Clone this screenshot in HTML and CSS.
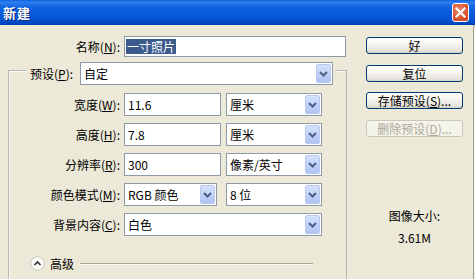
FILE: index.html
```
<!DOCTYPE html>
<html>
<head>
<meta charset="utf-8">
<title>新建</title>
<link rel="stylesheet" href="styles.css">
</head>
<body>
<div class="window">
  <div class="titlebar">
    <span class="title">新建</span>
    <span class="close"><svg width="17" height="19" viewBox="0 0 17 19"><path d="M4.5 5.5 L12.5 13.5 M12.5 5.5 L4.5 13.5" stroke="#fff" stroke-width="2.2" stroke-linecap="square" fill="none"/></svg></span>
  </div>
  <div class="content">
    <div class="main">
      <div class="name-row">
        <span class="lbl name-lbl">名称(<u>N</u>):</span>
        <div class="field name-field"><span class="sel">一寸照片</span></div>
      </div>
      <div class="group">
        <div class="group-head">
          <span class="lbl head-lbl">预设(<u>P</u>):</span>
          <div class="select preset"><span class="val">自定</span><span class="arrow"><svg width="9" height="6" viewBox="0 0 9 6"><path d="M1 1 L4.5 4.5 L8 1" stroke="#4d6185" stroke-width="2" fill="none"/></svg></span></div>
        </div>
        <div class="rows">
          <span class="lbl">宽度(<u>W</u>):</span>
          <div class="pair">
            <div class="field num">11.6</div>
            <div class="select unit"><span class="val">厘米</span><span class="arrow"><svg width="9" height="6" viewBox="0 0 9 6"><path d="M1 1 L4.5 4.5 L8 1" stroke="#4d6185" stroke-width="2" fill="none"/></svg></span></div>
          </div>
          <span class="lbl">高度(<u>H</u>):</span>
          <div class="pair">
            <div class="field num">7.8</div>
            <div class="select unit"><span class="val">厘米</span><span class="arrow"><svg width="9" height="6" viewBox="0 0 9 6"><path d="M1 1 L4.5 4.5 L8 1" stroke="#4d6185" stroke-width="2" fill="none"/></svg></span></div>
          </div>
          <span class="lbl">分辨率(<u>R</u>):</span>
          <div class="pair">
            <div class="field num">300</div>
            <div class="select unit"><span class="val">像素/英寸</span><span class="arrow"><svg width="9" height="6" viewBox="0 0 9 6"><path d="M1 1 L4.5 4.5 L8 1" stroke="#4d6185" stroke-width="2" fill="none"/></svg></span></div>
          </div>
          <span class="lbl">颜色模式(<u>M</u>):</span>
          <div class="pair wide-gap">
            <div class="select mode"><span class="val">RGB 颜色</span><span class="arrow"><svg width="9" height="6" viewBox="0 0 9 6"><path d="M1 1 L4.5 4.5 L8 1" stroke="#4d6185" stroke-width="2" fill="none"/></svg></span></div>
            <div class="select unit"><span class="val">8 位</span><span class="arrow"><svg width="9" height="6" viewBox="0 0 9 6"><path d="M1 1 L4.5 4.5 L8 1" stroke="#4d6185" stroke-width="2" fill="none"/></svg></span></div>
          </div>
          <span class="lbl">背景内容(<u>C</u>):</span>
          <div class="pair">
            <div class="select bg"><span class="val">白色</span><span class="arrow"><svg width="9" height="6" viewBox="0 0 9 6"><path d="M1 1 L4.5 4.5 L8 1" stroke="#4d6185" stroke-width="2" fill="none"/></svg></span></div>
          </div>
        </div>
        <div class="advanced">
          <span class="adv-btn"><svg width="15" height="15" viewBox="0 0 15 15"><circle cx="7.5" cy="7.5" r="6.8" fill="#fbfbf8" stroke="#c8c6bb" stroke-width="1"/><path d="M4.5 9 L7.5 6 L10.5 9" stroke="#2b2b2b" stroke-width="1.6" fill="none"/></svg></span>
          <span class="adv-text">高级</span>
          <div class="adv-line"></div>
        </div>
      </div>
    </div>
    <div class="side">
      <div class="btn">好</div>
      <div class="btn">复位</div>
      <div class="btn">存储预设(<u>S</u>)...</div>
      <div class="btn disabled">删除预设(<u>D</u>)...</div>
      <div class="imgsize">
        <div class="imgsize-lbl">图像大小:</div>
        <div class="imgsize-val">3.61M</div>
      </div>
    </div>
  </div>
</div>
</body>
</html>
```

FILE: styles.css
```
html, body {
  margin: 0;
  padding: 0;
}
body {
  width: 475px;
  height: 279px;
  overflow: hidden;
  font-family: "Noto Sans CJK SC", "DejaVu Sans", sans-serif;
  font-size: 12px;
  color: #000;
  background: #ECE9D8;
}
u {
  text-decoration: underline;
  text-underline-offset: 1px;
}
.window {
  width: 475px;
  height: 279px;
  display: flex;
  flex-direction: column;
}
.titlebar {
  height: 25px;
  flex: none;
  box-sizing: border-box;
  display: flex;
  align-items: center;
  justify-content: space-between;
  padding: 0 6px 0 3px;
  background: linear-gradient(#0b61dd 0%, #2f7ff0 8%, #0f62e0 30%, #0657d8 70%, #0049c4 92%, #003aa8 100%);
}
.title {
  color: #fff;
  font-weight: bold;
  font-size: 13px;
  line-height: 16px;
  letter-spacing: 1px;
  text-shadow: 1px 1px 0 #0a2a7a;
}
.close {
  width: 17px;
  height: 19px;
  box-sizing: border-box;
  border: 1px solid #fff;
  border-radius: 3px;
  background: radial-gradient(circle at 40% 35%, #f08a6a, #d9532f 60%, #c24020);
  display: flex;
}
.close svg {
  margin: -1px;
}
.content {
  flex: 1;
  display: flex;
  background: #ECE9D8;
  border-right: 1px solid #f4f3ee;
  box-shadow: inset -1px 0 0 #9f9d92;
}
.main {
  width: 347px;
  flex: none;
  display: flex;
  flex-direction: column;
  padding-top: 11px;
}
.lbl {
  text-align: right;
  line-height: 23px;
  white-space: nowrap;
}
.name-row {
  display: flex;
  align-items: center;
  height: 21px;
}
.name-lbl {
  width: 120px;
  line-height: 21px;
}
.field, .select {
  box-sizing: border-box;
  background: #fff;
  border: 1px solid #8e9aa8;
  height: 23px;
  line-height: 21px;
  padding-left: 3px;
  white-space: nowrap;
}
.name-field {
  margin-left: 4px;
  width: 222px;
  height: 21px;
  line-height: 19px;
  padding-left: 1px;
}
.sel {
  background: #3b5b8c;
  color: #fff;
  padding: 0 1px;
  display: inline-block;
  line-height: 15px;
}
.group {
  margin-top: 13px;
  margin-left: 8px;
  width: 339px;
  box-sizing: border-box;
  flex: 1;
  border: 1px solid #b9b7ab;
  border-bottom: none;
  box-shadow: inset 1px 1px 0 #fbfaf6;
}
.group-head {
  display: flex;
  align-items: center;
  margin-top: -9px;
  margin-left: 18px;
  width: 309px;
  box-sizing: border-box;
  padding: 0 3px;
  background: #ECE9D8;
}
.head-lbl {
  width: 46px;
  text-align: left;
  margin-right: 4px;
}
.select {
  display: flex;
  align-items: center;
  justify-content: space-between;
  padding-right: 1px;
}
.arrow {
  width: 15px;
  height: 19px;
  box-sizing: border-box;
  border-radius: 2px;
  background: linear-gradient(#d6e2fc, #bccff8 60%, #b0c4f3);
  border: 1px solid #b8c8ee;
  display: flex;
  align-items: center;
  justify-content: center;
}
.preset {
  width: 253px;
}
.rows {
  margin-top: 8px;
  display: grid;
  grid-template-columns: 111px auto;
  column-gap: 4px;
  row-gap: 7px;
}
.pair {
  display: flex;
  gap: 5px;
}
.pair.wide-gap {
  gap: 9px;
}
.num {
  width: 97px;
}
.unit {
  width: 96px;
}
.mode {
  width: 93px;
}
.bg {
  width: 198px;
}
.advanced {
  margin-top: 20px;
  margin-left: 21px;
  display: grid;
  grid-template-columns: 15px 25px 233px;
  column-gap: 5px;
  align-items: center;
  height: 15px;
}
.adv-btn {
  width: 15px;
  height: 15px;
  display: flex;
}
.adv-text {
  line-height: 15px;
  white-space: nowrap;
}
.adv-line {
  width: 233px;
  height: 1px;
  background: #a9a79a;
  box-shadow: 0 1px 0 #fbfaf6;
}
.side {
  flex: 1;
  padding-top: 12px;
  padding-left: 19px;
  display: flex;
  flex-direction: column;
}
.btn {
  width: 97px;
  height: 17px;
  box-sizing: border-box;
  border: 1px solid #003c74;
  border-radius: 3px;
  background: linear-gradient(#ffffff, #f3f2ee 50%, #e6e3da 85%, #d6d0c5);
  text-align: center;
  line-height: 15px;
  margin-bottom: 10.5px;
  white-space: nowrap;
}
.btn.disabled {
  border-color: #c9c7ba;
  background: #f5f4ea;
  color: #aca899;
}
.imgsize {
  margin-top: 62px;
  width: 97px;
  text-align: center;
}
.imgsize-lbl {
  line-height: 14px;
}
.imgsize-val {
  margin-top: 8px;
  line-height: 14px;
}
```
